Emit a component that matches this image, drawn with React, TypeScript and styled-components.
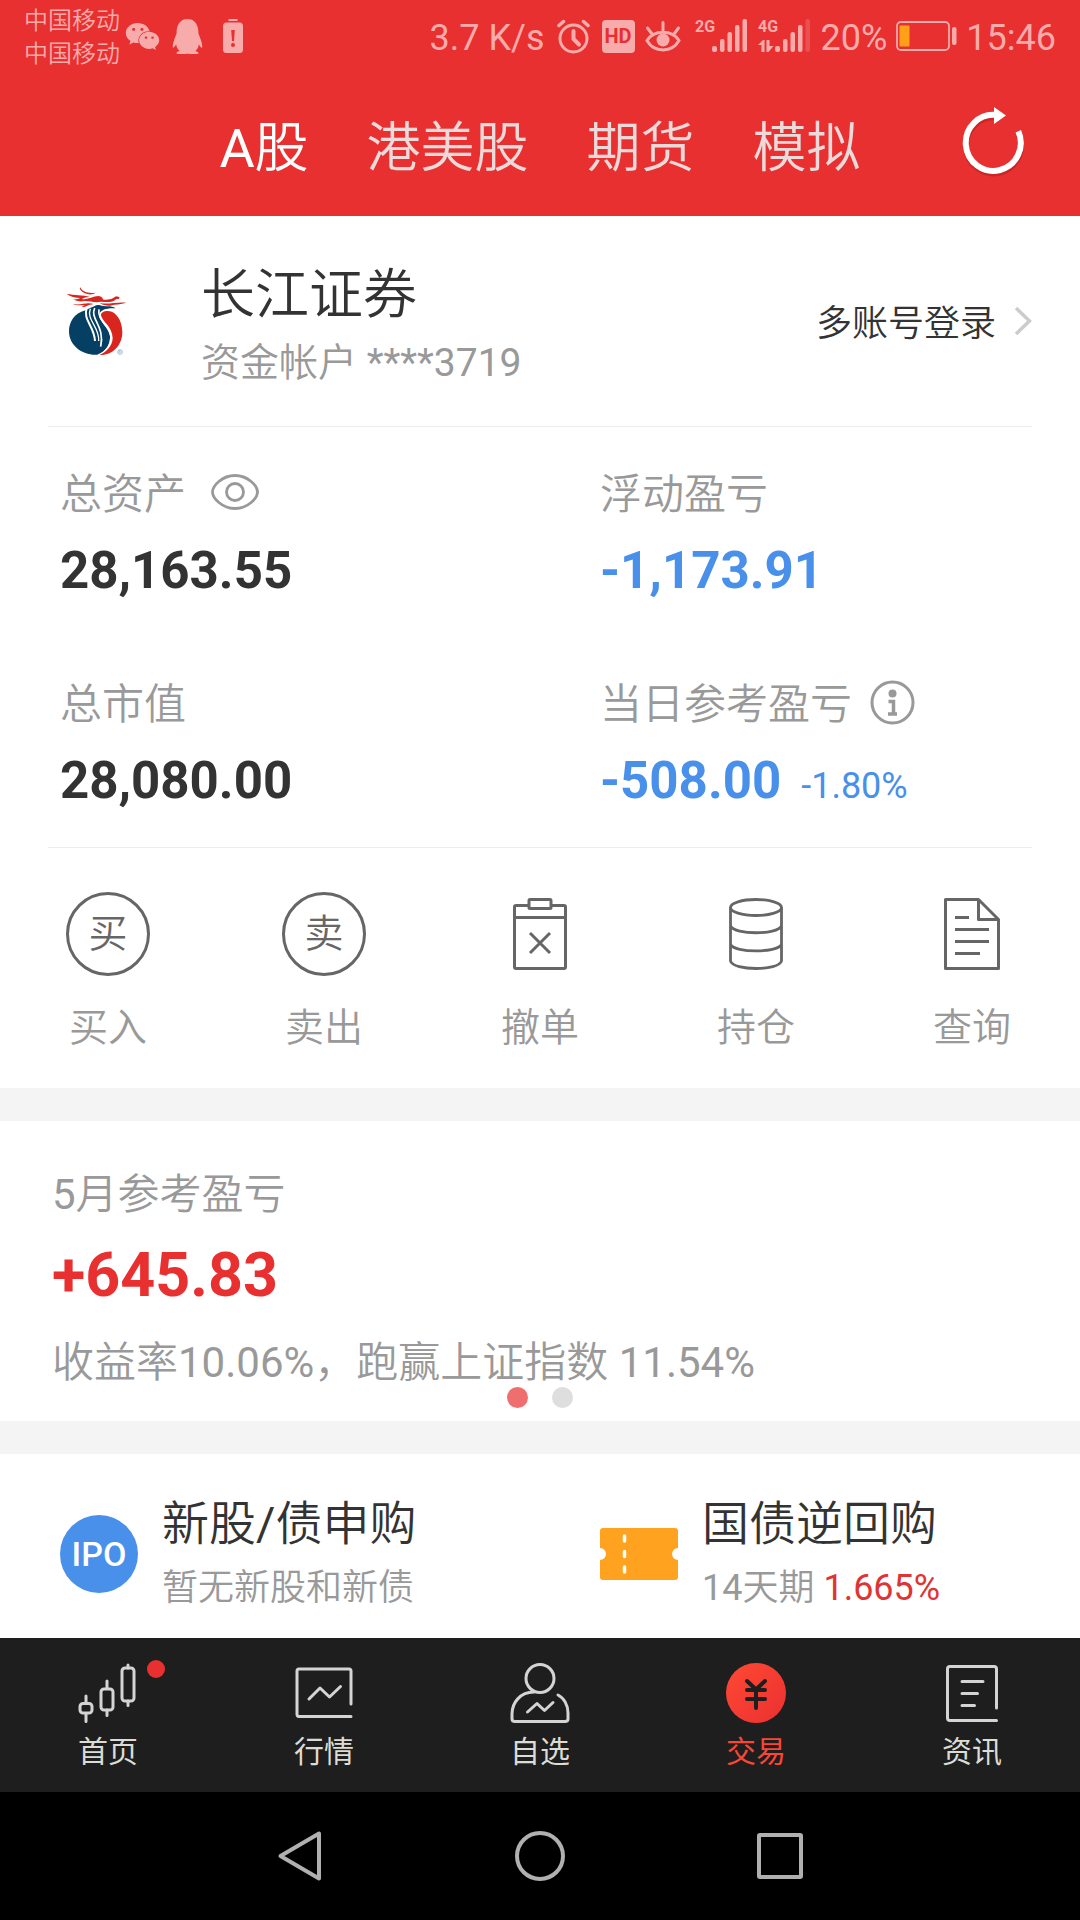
import React from "react";
import styled, { createGlobalStyle } from "styled-components";
import { FaQq, FaWeixin } from "react-icons/fa";

const GlobalStyle = createGlobalStyle`
  *, *::before, *::after { box-sizing: border-box; }
  body {
    margin: 0;
    background: #fff;
    color: #333;
    font-family: Roboto, "Noto Sans CJK SC DemiLight", "Noto Sans CJK SC", sans-serif;
    font-weight: 400;
  }
  button {
    margin: 0;
    padding: 0;
    border: 0;
    background: none;
    color: inherit;
    font: inherit;
    cursor: pointer;
  }
  a { color: inherit; text-decoration: none; }
  svg { display: block; flex: none; }
  h1, h2, p, dl, dt, dd { margin: 0; font-weight: inherit; }
`;

const Page = styled.div`
  display: flex;
  flex-direction: column;
  min-height: 100vh;
`;

/* ---------- status bar ---------- */

const Top = styled.header`
  background: #e83030;
  color: #fff;
`;

const StatusBar = styled.div`
  display: flex;
  align-items: center;
  justify-content: space-between;
  height: 72px;
  padding: 0 24px;
  color: #f8abab;
  font-size: 36px;
  line-height: 48px;
`;

const StatusGroup = styled.div`
  display: flex;
  align-items: center;
  gap: ${(p: { $gap?: number }) => p.$gap ?? 0}px;
`;

const StatusText = styled.span`
  padding-top: 4px;
`;

const Carriers = styled.div`
  display: flex;
  flex-direction: column;
  padding-top: 4px;
  font-size: 24px;
  line-height: 33px;
`;

const StatusIcon = styled.span`
  display: flex;
  align-items: center;
  justify-content: center;
  width: 45px;
`;

const HdBadge = styled.span`
  width: 33px;
  border-radius: 4px;
  background: #f8abab;
  color: #e83030;
  font-size: 20px;
  font-weight: 700;
  line-height: 33px;
  text-align: center;
`;

/* ---------- market tabs ---------- */

const MarketNav = styled.nav`
  display: grid;
  grid-template-columns: 1fr auto 1fr;
  align-items: center;
  height: 144px;
  padding: 0 54px;
`;

const MarketTabs = styled.div`
  display: flex;
  grid-column: 2;
  gap: 58px;
  padding-top: 10px;
`;

const MarketTab = styled.button<{ $active?: boolean }>`
  color: ${(p) => (p.$active ? "#fff" : "#ecdada")};
  font-size: 54px;
  line-height: 72px;
`;

const RefreshButton = styled.button`
  justify-self: end;
`;

/* ---------- account ---------- */

const Account = styled.section`
  display: flex;
  align-items: center;
  margin: 0 48px;
  padding: 34px 0 34px 12px;
  border-bottom: 1px solid #ececec;
`;

const AccountText = styled.div`
  flex: 1;
  margin-left: 69px;
  padding-top: 8px;
`;

const BrokerName = styled.h1`
  font-size: 54px;
  line-height: 76px;
`;

const AccountNumber = styled.p`
  color: #999;
  font-size: 39px;
  line-height: 58px;
`;

const AccountLink = styled.a`
  display: flex;
  align-items: center;
  gap: 18px;
  font-size: 36px;
  line-height: 48px;
`;

const AccountLinkText = styled.span`
  padding-top: 6px;
`;

/* ---------- assets ---------- */

const Assets = styled.dl`
  display: grid;
  grid-template-columns: 1fr 1fr;
`;

const Asset = styled.div`
  padding: 40px 0 34px 60px;
`;

const Label = styled.dt`
  display: flex;
  align-items: center;
  gap: 18px;
  color: #999;
  font-size: 42px;
  line-height: 56px;
`;

const LabelButton = styled.button`
  padding-bottom: 6px;
`;

const Value = styled.dd<{ $down?: boolean }>`
  display: flex;
  align-items: baseline;
  gap: 20px;
  margin-top: 16px;
  color: ${(p) => (p.$down ? "#4890ea" : "#333")};
  font-size: 51px;
  font-weight: 700;
  line-height: 64px;
`;

const Percent = styled.span`
  font-size: 36px;
  font-weight: 400;
  line-height: 36px;
`;

const Divider = styled.hr`
  height: 1px;
  margin: 0 48px;
  border: 0;
  background: #ececec;
`;

/* ---------- actions ---------- */

const Actions = styled.nav`
  display: grid;
  grid-template-columns: repeat(5, 1fr);
  padding: 44px 0 32px;
`;

const Action = styled.button`
  display: flex;
  flex-direction: column;
  align-items: center;
  gap: 24px;
  color: #999;
  font-size: 39px;
  line-height: 56px;
`;

const ActionIcon = styled.span<{ $ring?: boolean }>`
  display: flex;
  align-items: center;
  justify-content: center;
  width: 84px;
  height: 84px;
  border: ${(p) => (p.$ring ? "3px solid #666" : "0")};
  border-radius: 50%;
  color: #666;
`;

const Band = styled.div`
  height: 33px;
  background: #f4f4f4;
`;

/* ---------- month summary ---------- */

const Month = styled.section`
  padding: 46px 52px 13px;
  color: #999;
  font-size: 42px;
`;

const MonthTitle = styled.h2`
  font-size: 42px;
  line-height: 56px;
`;

const MonthValue = styled.p`
  margin-top: 16px;
  color: #e83030;
  font-size: 61px;
  font-weight: 700;
  line-height: 72px;
`;

const MonthNote = styled.p`
  margin-top: 28px;
  line-height: 48px;
`;

const Dots = styled.div`
  display: flex;
  justify-content: center;
  gap: 24px;
`;

const Dot = styled.button<{ $active?: boolean }>`
  width: 21px;
  height: 21px;
  border-radius: 50%;
  background: ${(p) => (p.$active ? "#ef6e6e" : "#dedede")};
`;

/* ---------- products ---------- */

const Products = styled.section`
  display: grid;
  flex: 1;
  align-content: start;
  grid-template-columns: 1fr 1fr;
`;

const Product = styled.a`
  display: flex;
  align-items: center;
  gap: 24px;
  padding: 36px 0 20px 60px;
`;

const IpoBadge = styled.span`
  width: 78px;
  border-radius: 50%;
  background: #4890ea;
  color: #fff;
  font-size: 34px;
  font-weight: 500;
  line-height: 78px;
  text-align: center;
`;

const ProductTitle = styled.h2`
  font-size: 47px;
  line-height: 68px;
`;

const ProductNote = styled.p`
  color: #999;
  font-size: 36px;
  line-height: 60px;
`;

const Rate = styled.span`
  color: #e03434;
`;

/* ---------- bottom bars ---------- */

const TabBar = styled.nav`
  display: grid;
  grid-template-columns: repeat(5, 1fr);
  padding: 25px 0 20px;
  background: #1e1e1e;
`;

const Tab = styled.a<{ $active?: boolean }>`
  display: flex;
  flex-direction: column;
  align-items: center;
  gap: 9px;
  color: ${(p) => (p.$active ? "#fb4636" : "#dcdcd4")};
  font-family: Roboto, "Noto Sans CJK SC", sans-serif;
  font-size: 30px;
  line-height: 40px;
`;

const TabIcon = styled.span`
  position: relative;
`;

const Unread = styled.span`
  position: absolute;
  top: -3px;
  right: -27px;
  width: 18px;
  height: 18px;
  border-radius: 50%;
  background: #e83030;
`;

const SystemBar = styled.div`
  display: flex;
  align-items: center;
  justify-content: center;
  gap: 188px;
  height: 128px;
  background: #000;
`;

/* ---------- drawings ---------- */

const AlarmIcon = () => (
  <svg width="33" height="35" viewBox="0 0 33 35" fill="none" stroke="currentColor" strokeWidth="3" strokeLinecap="round">
    <circle cx="16.500" cy="19.500" r="13.500" />
    <path d="M16.500 12v8l5.500 5.500" strokeWidth="4" />
    <path d="M2 6.500l4.500-4M31 6.500l-4.500-4" strokeWidth="3.500" />
  </svg>
);

const EyeCareIcon = () => (
  <svg width="36" height="33" viewBox="0 0 36 33" fill="none" stroke="currentColor" strokeWidth="3" strokeLinecap="round">
    <path d="M2 20.500C9 9.500 27 9.500 34 20.500C27 33 9 33 2 20.500Z" />
    <circle cx="18" cy="20" r="6.500" fill="currentColor" stroke="none" />
    <path d="M18 2.500v8M2.500 8l4.500 6M33.500 8L29 14" />
  </svg>
);

const BatteryAlert = () => (
  <svg width="20" height="34" viewBox="0 0 20 34" fill="currentColor">
    <rect x="5.500" width="9" height="2" />
    <rect y="3.500" width="20" height="30.500" rx="3.500" />
    <path d="M8.200 11h3.600l-.8 11H9z" fill="#e83030" />
    <circle cx="10" cy="26" r="2" fill="#e83030" />
  </svg>
);

const Signal = ({ label, data }: { label: string; data?: boolean }) => (
  <svg width="54" height="42" viewBox="0 -4 54 42" fill="currentColor">
    <text x="0" y="13" fontSize="16" fontWeight="700" fontFamily="Roboto, sans-serif">{label}</text>
    <rect x="17" y="27" width="5" height="6" rx="2" />
    <rect x="25" y="20" width="4.500" height="13" rx="2" />
    <rect x="32.500" y="13" width="4.500" height="20" rx="2" />
    <rect x="40" y="6" width="4.500" height="27" rx="2" />
    <rect x="47.500" y="0" width="4.500" height="33" rx="2" opacity={data ? 0.25 : 1} />
    {data && <path d="M0 26l5-5h1.500v12H3.500v-7zM8.500 21h3v6h4l-5 6h-2z" />}
  </svg>
);

const BatteryLevel = () => (
  <svg width="61" height="30" viewBox="0 0 61 30" fill="none">
    <rect x="1" y="1" width="52" height="28" rx="4" stroke="currentColor" strokeWidth="1.800" />
    <rect x="3.500" y="4.500" width="10" height="21" rx="1" fill="#ffa019" />
    <rect x="56" y="6" width="4.500" height="18" rx="2" fill="currentColor" />
  </svg>
);

const RefreshIcon = () => (
  <svg width="65" height="70" viewBox="0 2 65 70" overflow="visible" fill="none">
    <path d="M36.500 9.200A27.500 28 0 1 0 57.300 24.800" stroke="#b52020" strokeOpacity=".6" strokeWidth="6" transform="translate(0 1.500)" />
    <path d="M35 8A27.500 28 0 1 0 57.300 24.300" stroke="#fff" strokeWidth="6" />
    <path d="M33 0l12 8.500L33 17z" fill="#fff" />
  </svg>
);

const BrokerLogo = () => (
  <svg width="72" height="72" viewBox="30 45 216 216" fill="none" role="img" aria-label="长江证券">
    <path d="M106 121C72 130 57 157 57 185C58 226 96 256 141 254C170 243 182 222 180 197C176 170 147 158 148 133C150 119 172 113 197 115C184 105 163 112 150 106C138 102 131 112 122 113Z" fill="#053f63" />
    <path d="M110 114C98 150 133 168 135 213" stroke="#fff" strokeWidth="6" />
    <path d="M121 116C108 150 150 172 146 213" stroke="#fff" strokeWidth="4" />
    <path d="M134 114C119 148 166 168 152 230" stroke="#fff" strokeWidth="5" />
    <path d="M147 118C140 150 181 168 183 201C183 225 172 241 151 255" stroke="#fff" strokeWidth="5" />
    <path d="M153 136C156 155 187 169 188 205C187 229 167 249 148 255C188 257 217 226 217 186C216 153 200 124 174 123C160 123 152 129 153 136Z" fill="#d9251d" />
    <path d="M50 71C73 77 99 74 119 80C105 82 98 84 96 88C118 89 140 72 153 80C161 85 157 89 164 89C184 90 192 83 198 79L208 81C210 87 204 88 199 87C190 98 169 97 154 95C129 100 116 90 98 94C88 95 78 93 70 88C78 89 85 87 91 84C75 84 61 80 50 71Z" fill="#d9251d" />
    <path d="M91 52C95 64 111 71 137 68C126 77 103 74 92 61Q87 55 91 52ZM68 101C91 108 107 95 131 102C112 105 108 112 96 111C98 108 102 107 104 105C92 106 78 108 68 101ZM150 99C175 104 201 95 229 98C211 104 196 102 181 107C170 108 157 105 150 99Z" fill="#d9251d" />
    <circle cx="210" cy="246" r="7" stroke="#7ba0b8" strokeWidth="2" />
    <path d="M207 250v-8h4q3 2 0 4h-4m4 0l3 4" stroke="#7ba0b8" strokeWidth="1.500" />
  </svg>
);

const Chevron = () => (
  <svg width="18" height="32" viewBox="0 0 18 32" fill="none" stroke="#ccc" strokeWidth="3.500">
    <path d="M2 3l13.500 13L2 29" />
  </svg>
);

const EyeIcon = () => (
  <svg width="56" height="38" viewBox="-6 0 56 38" fill="none" stroke="#999" strokeWidth="2.800">
    <path d="M2.500 19C2.500 13 12 2.500 25 2.500S47.500 13 47.500 19S38 35.500 25 35.500S2.500 25 2.500 19Z" />
    <circle cx="25" cy="19" r="8.500" />
  </svg>
);

const InfoIcon = () => (
  <svg width="45" height="45" viewBox="0 0 45 45" fill="none" stroke="#999" strokeWidth="3">
    <circle cx="22.500" cy="22.500" r="20.500" />
    <circle cx="22.500" cy="13.500" r="4" fill="#999" stroke="none" />
    <path d="M18.500 21.500h5v12.500M18 34h9" strokeWidth="3.500" />
  </svg>
);

const CancelIcon = () => (
  <svg width="56" height="74" viewBox="0 0 56 74" fill="none" stroke="currentColor" strokeWidth="3">
    <path d="M16 8.500H4Q2.500 8.500 2.500 10V70Q2.500 71.500 4 71.500H52Q53.500 71.500 53.500 70V10Q53.500 8.500 52 8.500H40M2.500 20.500h51" />
    <rect x="17" y="2.500" width="22" height="9" rx="1" />
    <path d="M18 36l20 20M38 36L18 56" />
  </svg>
);

const HoldingsIcon = () => (
  <svg width="56" height="74" viewBox="0 0 56 74" fill="none" stroke="currentColor" strokeWidth="2.800">
    <ellipse cx="28" cy="10.500" rx="25.500" ry="8" />
    <path d="M2.500 10.500V64C5 74 51 74 53.500 64V10.500M2.500 29C7 38 49 38 53.500 29M2.500 47.500C7 56 49 56 53.500 47.500" />
  </svg>
);

const QueryIcon = () => (
  <svg width="58" height="74" viewBox="0 0 58 74" fill="none" stroke="currentColor" strokeWidth="3" strokeLinejoin="round">
    <path d="M2.500 2.500H35.500L55.500 22.500V71.500H2.500ZM35.500 2.500V22.500H55.500M12 20.500h14M12 32.500h34M12 44.500h34M12 56.500h25" />
  </svg>
);

const TicketIcon = () => (
  <svg width="78" height="52" viewBox="0 0 78 52">
    <path d="M3 0H75Q78 0 78 3V20A6 6 0 0 0 78 32V49Q78 52 75 52H3Q0 52 0 49V32A6 6 0 0 0 0 20V3Q0 0 3 0Z" fill="#ffa21f" />
    <path d="M24.500 8v5M24.500 23.500v5M24.500 39v5" stroke="#fff" strokeWidth="3.500" strokeLinecap="round" />
  </svg>
);

const tabSvg = {
  width: 60,
  height: 60,
  viewBox: "0 0 60 60",
  fill: "none",
  stroke: "#d4d4d4",
  strokeWidth: 3,
  strokeLinecap: "round" as const,
  strokeLinejoin: "round" as const,
};

const HomeIcon = () => (
  <svg {...tabSvg}>
    <rect x="2" y="40.500" width="12" height="9.500" rx="3" />
    <rect x="23" y="26" width="12" height="21" rx="3" />
    <rect x="44" y="5" width="12" height="33" rx="3" />
    <path d="M8 33v7M8 50.500v8M29 18v7M29 47v5.500M50 2v3M50 38v4.500" />
  </svg>
);

const QuotesIcon = () => (
  <svg {...tabSvg}>
    <path d="M57 41V8Q57 6 55 6H5Q3 6 3 8V51Q3 53.500 5 53.500H57M15 36L26 25L35.500 34L46.500 23.500" />
  </svg>
);

const WatchlistIcon = () => (
  <svg {...tabSvg}>
    <circle cx="30" cy="15.500" r="14" />
    <path d="M24 29C10 29 2 40 2 51V56Q2 58.500 5 58.500H55Q58 58.500 58 56V50C58 42 54 35 48 32M17.500 49L27 40.500L34.500 47.500L43 39.500" />
  </svg>
);

const TradeIcon = () => (
  <svg {...tabSvg} stroke="#1e1e1e" strokeWidth={4}>
    <defs>
      <linearGradient id="trade" x1="0" y1="0" x2="1" y2="1">
        <stop offset="0" stopColor="#ff4934" />
        <stop offset="1" stopColor="#ea3030" />
      </linearGradient>
    </defs>
    <circle cx="30" cy="30" r="30" fill="url(#trade)" stroke="none" />
    <path d="M21 18l9 8.500l9-8.500M21 27h18M21 36h18M30 27v18" />
  </svg>
);

const NewsIcon = () => (
  <svg {...tabSvg}>
    <path d="M54.500 45V6Q54.500 3.500 52 3.500H8Q5.500 3.500 5.500 6V55Q5.500 57.500 8 57.500H54.500M20 18.500h21M20 30.500h15.500M20 42.500h12.500" />
  </svg>
);

const systemSvg = {
  width: 52,
  height: 52,
  viewBox: "0 0 52 52",
  fill: "none",
  stroke: "#b0b0b0",
  strokeWidth: 4,
  strokeLinejoin: "round" as const,
};

/* ---------- page ---------- */

const actions = [
  { label: "买入", ring: true, icon: "买" },
  { label: "卖出", ring: true, icon: "卖" },
  { label: "撤单", icon: <CancelIcon /> },
  { label: "持仓", icon: <HoldingsIcon /> },
  { label: "查询", icon: <QueryIcon /> },
];

const tabs = [
  { label: "首页", icon: <HomeIcon />, unread: true },
  { label: "行情", icon: <QuotesIcon /> },
  { label: "自选", icon: <WatchlistIcon /> },
  { label: "交易", icon: <TradeIcon />, active: true },
  { label: "资讯", icon: <NewsIcon /> },
];

export default function App() {
  return (
    <Page>
      <GlobalStyle />
      <Top>
        <StatusBar>
          <StatusGroup>
            <Carriers>
              <span>中国移动</span>
              <span>中国移动</span>
            </Carriers>
            <StatusIcon><FaWeixin size={35} /></StatusIcon>
            <StatusIcon><FaQq size={35} /></StatusIcon>
            <StatusIcon><BatteryAlert /></StatusIcon>
          </StatusGroup>
          <StatusGroup $gap={9}>
            <StatusGroup $gap={6}>
              <StatusText>3.7 K/s</StatusText>
              <StatusGroup>
                <StatusIcon><AlarmIcon /></StatusIcon>
                <StatusIcon><HdBadge>HD</HdBadge></StatusIcon>
                <StatusIcon><EyeCareIcon /></StatusIcon>
              </StatusGroup>
            </StatusGroup>
            <Signal label="2G" />
            <Signal label="4G" data />
            <StatusText>20%</StatusText>
            <BatteryLevel />
            <StatusText>15:46</StatusText>
          </StatusGroup>
        </StatusBar>
        <MarketNav>
          <MarketTabs>
            <MarketTab $active>A股</MarketTab>
            <MarketTab>港美股</MarketTab>
            <MarketTab>期货</MarketTab>
            <MarketTab>模拟</MarketTab>
          </MarketTabs>
          <RefreshButton aria-label="刷新"><RefreshIcon /></RefreshButton>
        </MarketNav>
      </Top>

      <Account>
        <BrokerLogo />
        <AccountText>
          <BrokerName>长江证券</BrokerName>
          <AccountNumber>资金帐户 ****3719</AccountNumber>
        </AccountText>
        <AccountLink href="#accounts">
          <AccountLinkText>多账号登录</AccountLinkText>
          <Chevron />
        </AccountLink>
      </Account>

      <Assets>
        <Asset>
          <Label>总资产<LabelButton aria-label="隐藏金额"><EyeIcon /></LabelButton></Label>
          <Value>28,163.55</Value>
        </Asset>
        <Asset>
          <Label>浮动盈亏</Label>
          <Value $down>-1,173.91</Value>
        </Asset>
        <Asset>
          <Label>总市值</Label>
          <Value>28,080.00</Value>
        </Asset>
        <Asset>
          <Label>当日参考盈亏<LabelButton aria-label="说明"><InfoIcon /></LabelButton></Label>
          <Value $down>-508.00<Percent>-1.80%</Percent></Value>
        </Asset>
      </Assets>
      <Divider />

      <Actions>
        {actions.map((a) => (
          <Action key={a.label}>
            <ActionIcon $ring={a.ring}>{a.icon}</ActionIcon>
            {a.label}
          </Action>
        ))}
      </Actions>

      <Band />
      <Month>
        <MonthTitle>5月参考盈亏</MonthTitle>
        <MonthValue>+645.83</MonthValue>
        <MonthNote>收益率10.06%，跑赢上证指数 11.54%</MonthNote>
        <Dots>
          <Dot $active aria-label="第1页" />
          <Dot aria-label="第2页" />
        </Dots>
      </Month>
      <Band />

      <Products>
        <Product href="#ipo">
          <IpoBadge>IPO</IpoBadge>
          <div>
            <ProductTitle>新股/债申购</ProductTitle>
            <ProductNote>暂无新股和新债</ProductNote>
          </div>
        </Product>
        <Product href="#repo">
          <TicketIcon />
          <div>
            <ProductTitle>国债逆回购</ProductTitle>
            <ProductNote>14天期 <Rate>1.665%</Rate></ProductNote>
          </div>
        </Product>
      </Products>

      <TabBar>
        {tabs.map((t) => (
          <Tab key={t.label} href={`#${t.label}`} $active={t.active}>
            <TabIcon>
              {t.icon}
              {t.unread && <Unread />}
            </TabIcon>
            {t.label}
          </Tab>
        ))}
      </TabBar>
      <SystemBar>
        <button aria-label="返回">
          <svg {...systemSvg}><path d="M45 3.500V48.500L6.500 26Z" /></svg>
        </button>
        <button aria-label="主屏幕">
          <svg {...systemSvg}><circle cx="26" cy="26" r="23" /></svg>
        </button>
        <button aria-label="最近任务">
          <svg {...systemSvg}><rect x="5" y="5" width="42" height="42" rx="1" /></svg>
        </button>
      </SystemBar>
    </Page>
  );
}
